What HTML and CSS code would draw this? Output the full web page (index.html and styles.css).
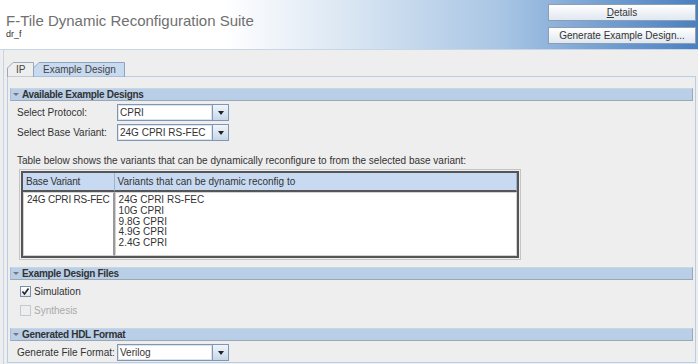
FILE: index.html
```html
<!DOCTYPE html>
<html lang="en">
<head>
    <meta charset="UTF-8">
    <title>F-Tile Dynamic Reconfiguration Suite</title>
    <link rel="stylesheet" href="styles.css">
</head>
<body>
    <div class="header">
        <div class="title-block">
            <div class="title">F-Tile Dynamic Reconfiguration Suite</div>
            <div class="subtitle">dr_f</div>
        </div>
        <div class="header-buttons">
            <button class="button"><u>D</u>etails</button>
            <button class="button">Generate Example Design...</button>
        </div>
    </div>

    <div class="frame">
        <div class="tabs">
            <div class="tab tab-ip">
                <svg class="tab-shape" width="27" height="15" viewBox="0 0 27 15"><polygon points="0.5,15 0.5,6 6,0.5 26.5,0.5 26.5,15" /></svg>
                <span>IP</span>
            </div>
            <div class="tab tab-active">
                <svg class="tab-shape" width="92" height="15" viewBox="0 0 92 15"><polygon points="0.5,15 0.5,6 6,0.5 91.5,0.5 91.5,15" /></svg>
                <span>Example Design</span>
            </div>
        </div>

        <div class="tab-panel">
            <div class="section-title"><span class="arrow"></span>Available Example Designs</div>
            <div class="form-row">
                <label>Select Protocol:</label>
                <div class="combo"><div class="combo-field">CPRI</div><div class="combo-button"><span class="combo-arrow"></span></div></div>
            </div>
            <div class="form-row">
                <label>Select Base Variant:</label>
                <div class="combo"><div class="combo-field">24G CPRI RS-FEC</div><div class="combo-button"><span class="combo-arrow"></span></div></div>
            </div>

            <div class="description">Table below shows the variants that can be dynamically reconfigure to from the selected base variant:</div>
            <div class="table-box">
                <table class="variant-table">
                    <thead>
                        <tr>
                            <th class="col-base">Base Variant</th>
                            <th>Variants that can be dynamic reconfig to</th>
                        </tr>
                    </thead>
                    <tbody>
                        <tr>
                            <td class="col-base">24G CPRI RS-FEC</td>
                            <td>24G CPRI RS-FEC<br>10G CPRI<br>9.8G CPRI<br>4.9G CPRI<br>2.4G CPRI</td>
                        </tr>
                    </tbody>
                </table>
            </div>

            <div class="section-title section-gap"><span class="arrow"></span>Example Design Files</div>
            <div class="check-row first-check">
                <span class="checkbox"><svg width="9" height="9" viewBox="0 0 9 9"><path d="M1.5 4.5 L3.5 7 L7.5 1.5" /></svg></span>
                <span>Simulation</span>
            </div>
            <div class="check-row disabled">
                <span class="checkbox"></span>
                <span>Synthesis</span>
            </div>

            <div class="section-title section-gap-small"><span class="arrow"></span>Generated HDL Format</div>
            <div class="form-row">
                <label>Generate File Format:</label>
                <div class="combo"><div class="combo-field">Verilog</div><div class="combo-button"><span class="combo-arrow"></span></div></div>
            </div>
        </div>
    </div>
</body>
</html>
```

FILE: styles.css
```css
body {
    margin: 0;
    width: 698px;
    height: 364px;
    overflow: hidden;
    background-color: #eeeeee;
    font-family: "Liberation Sans", Arial, sans-serif;
    font-size: 10px;
    color: #333;
}
.header {
    height: 49px;
    display: flex;
    justify-content: space-between;
    background: linear-gradient(to right, #ffffff 0%, #ffffff 32%, #dae6f3 50%, #a8c5e4 72%, #6f9cd0 88%, #4a80c0 100%);
    border-bottom: 1px solid #c6d6e6;
}
.title-block {
    padding: 12px 0 0 6px;
}
.title {
    font-size: 15px;
    line-height: 17px;
    color: #707070;
}
.subtitle {
    font-size: 9px;
    line-height: 10px;
    color: #333;
}
.header-buttons {
    display: flex;
    flex-direction: column;
    gap: 6px;
    width: 148px;
    padding: 4px 2px 0 0;
}
.button {
    height: 17px;
    padding: 0;
    border: 1px solid #8e9db1;
    background: linear-gradient(#ffffff, #dfe7f0);
    font-family: "Liberation Sans", Arial, sans-serif;
    font-size: 10px;
    color: #333;
}
.frame {
    height: 302px;
    margin-left: 3px;
    padding-top: 12px;
    border-left: 1px solid #c5d5e6;
}
.tabs {
    display: flex;
    height: 14px;
    margin-left: 3px;
}
.tab {
    position: relative;
    height: 14px;
}
.tab-shape {
    position: absolute;
    left: 0;
    top: 0;
}
.tab-shape polygon {
    stroke-width: 1;
}
.tab-ip {
    width: 27px;
}
.tab-ip polygon {
    fill: #eeeeee;
    stroke: #9aa9ba;
}
.tab-active {
    width: 92px;
    margin-left: -1px;
}
.tab-active polygon {
    fill: #c8daf0;
    stroke: #8ea5c0;
}
.tab span {
    position: relative;
    display: block;
    line-height: 15px;
    padding-left: 9px;
    color: #444;
}
.tab-active span {
    padding-left: 10px;
}
.tab-panel {
    box-sizing: border-box;
    width: 689px;
    height: 287px;
    margin-left: 3px;
    padding: 11px 2px 0 2px;
    border: 1px solid #b9cee5;
}
.section-title {
    box-sizing: border-box;
    height: 13px;
    display: flex;
    align-items: center;
    padding-left: 2px;
    background-color: #b9cfe7;
    border: 1px solid #9ba7b5;
    border-top-color: #c9d5e2;
    border-left-color: #b0bccb;
    font-weight: bold;
    letter-spacing: -0.3px;
    color: #333;
}
.section-gap {
    margin-top: 7px;
}
.section-gap-small {
    margin-top: 8px;
}
.arrow {
    width: 0;
    height: 0;
    margin-right: 3px;
    border-left: 3px solid transparent;
    border-right: 3px solid transparent;
    border-top: 3px solid #777;
}
.form-row {
    display: flex;
    align-items: center;
    margin-top: 3px;
    padding-left: 7px;
}
.form-row label {
    width: 100px;
}
.combo {
    display: flex;
    width: 112px;
    height: 17px;
}
.combo-field {
    flex: 1;
    box-sizing: border-box;
    padding-left: 2px;
    line-height: 15px;
    background-color: white;
    border: 1px solid #8197b1;
    box-shadow: inset 0 0 0 1px #d9e4f0;
}
.combo-button {
    box-sizing: border-box;
    width: 16px;
    display: flex;
    align-items: center;
    justify-content: center;
    background: linear-gradient(#f0f5fa, #c6d7ea);
    border: 1px solid #8197b1;
    border-left: none;
}
.combo-arrow {
    width: 0;
    height: 0;
    border-left: 3.5px solid transparent;
    border-right: 3.5px solid transparent;
    border-top: 4px solid #222;
}
.description {
    margin: 14px 0 0 7px;
    line-height: 12px;
}
.table-box {
    width: 502px;
    box-sizing: border-box;
    margin: 2px 0 0 9px;
    padding: 1px;
    border: 1px solid #c4c4c4;
}
.variant-table {
    width: 100%;
    border-collapse: separate;
    border-spacing: 0;
    border: 2px solid #555;
}
.variant-table th {
    height: 17px;
    padding: 0 0 0 3px;
    text-align: left;
    font-weight: normal;
    background-color: #c7daf1;
    border-bottom: 2px solid #555;
    border-right: 1px solid #9db3cb;
    color: #333;
}
.variant-table td {
    height: 60px;
    padding: 2px 3px 0 3px;
    vertical-align: top;
    line-height: 10.8px;
    background-color: white;
    border: 1px solid #d2d2d2;
    color: #333;
}
.variant-table td.col-base {
    border-right: 2px solid #9a9a9a;
}
.col-base {
    width: 82px;
    white-space: nowrap;
    letter-spacing: -0.2px;
}
.check-row {
    display: flex;
    align-items: center;
    gap: 3px;
    height: 19px;
    padding-left: 10px;
}
.first-check {
    margin-top: 2px;
}
.checkbox {
    box-sizing: border-box;
    width: 11px;
    height: 11px;
    display: flex;
    align-items: center;
    justify-content: center;
    background: linear-gradient(#ffffff, #dde6ef);
    border: 1px solid #7d8fa5;
}
.checkbox path {
    fill: none;
    stroke: #222;
    stroke-width: 1.6;
}
.disabled {
    color: #aaa;
}
.disabled .checkbox {
    background: #eeeeee;
    border-color: #c3c9d0;
}
```
